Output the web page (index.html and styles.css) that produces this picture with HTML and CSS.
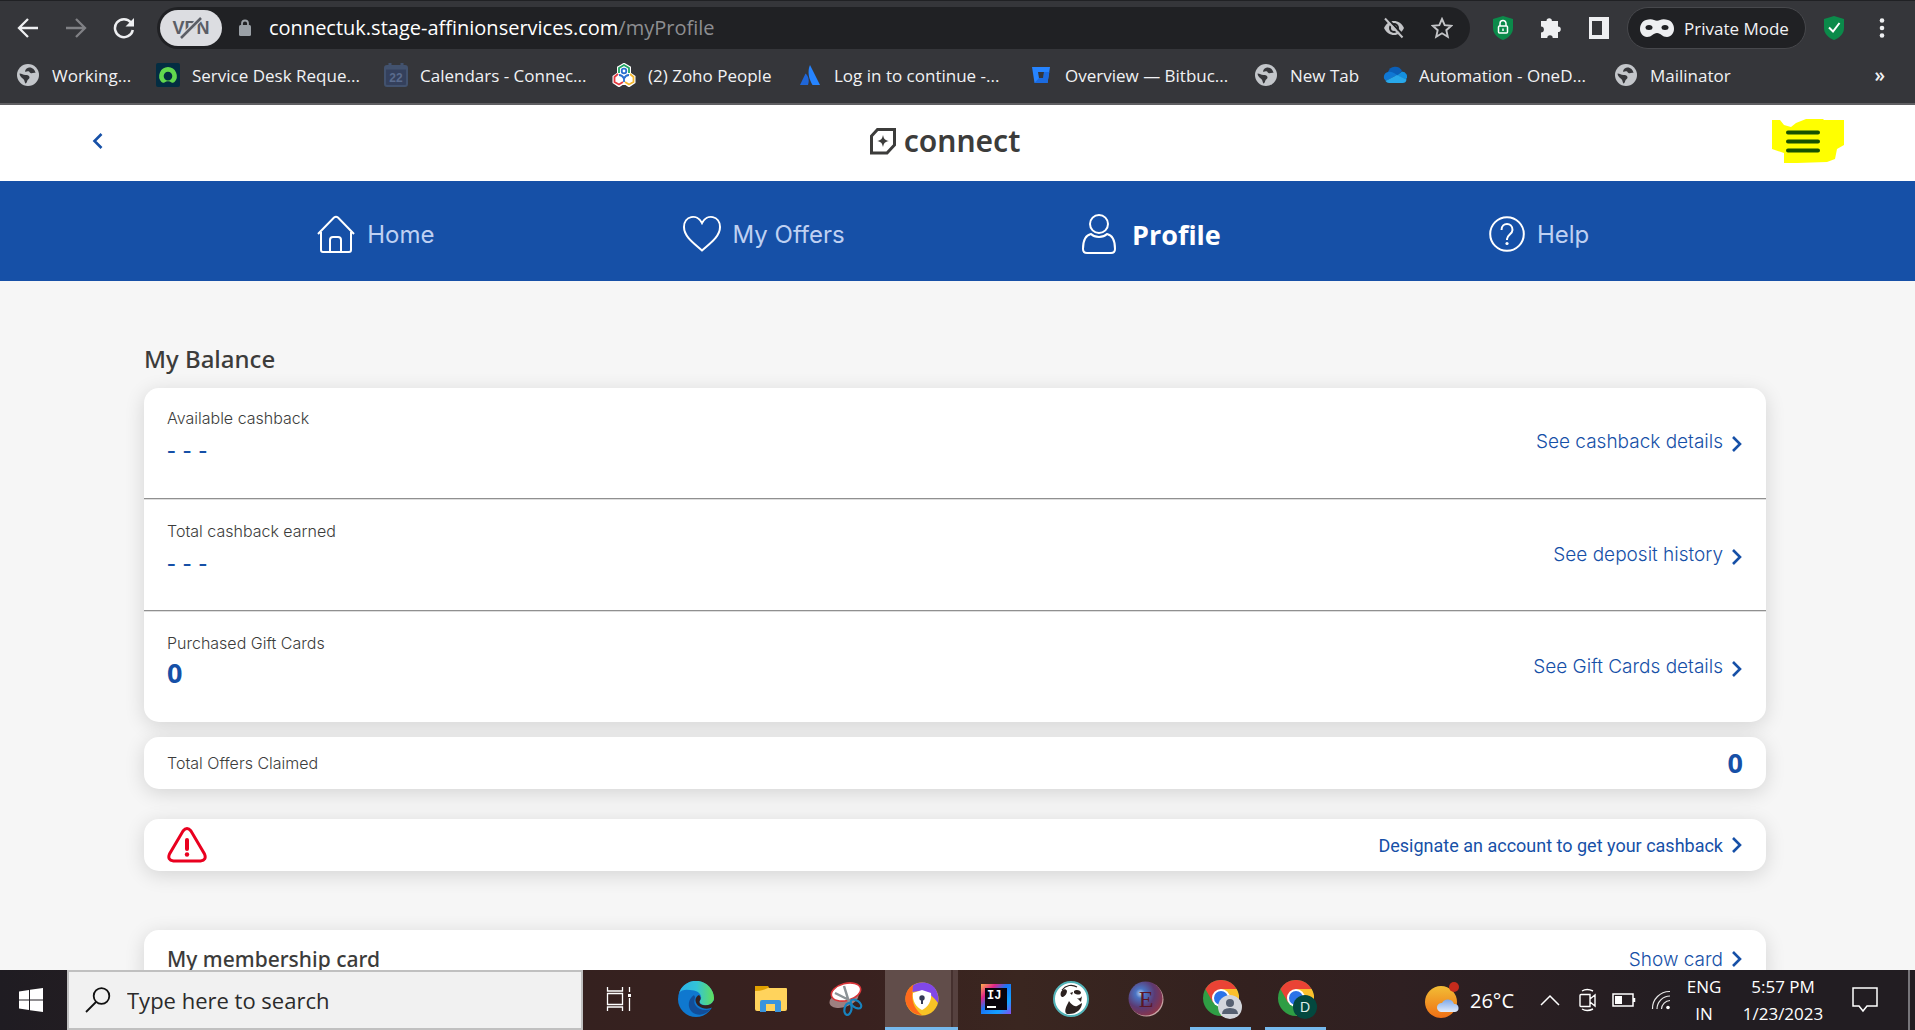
FILE: index.html
```html
<!DOCTYPE html>
<html lang="en">
<head>
<meta charset="utf-8">
<title>Connect - My Profile</title>
<link rel="stylesheet" href="styles.css">
</head>
<body>
<svg width="0" height="0" class="defs" aria-hidden="true">
  <defs>
    <symbol id="globe" viewBox="0 0 24 24"><circle cx="12" cy="12" r="11" fill="#c3c6ca"/><path d="M13 4.500c3-.5 6 2 6.500 5.500-2-.6-3 .6-4.500.3-1.600-.3-1.200-1.800-2.700-2-1.500-.3-2 .8-3.300.2 .3-2 2-3.700 4-4zM3.500 10.500c2.500 0 3.500 1.500 6 1.500 2 0 4 .6 4 2.600 0 1.800-2 1.800-2.400 3.600-.2 1.200-.8 2.200-1.800 2.200-1-2-.6-3.300-2.300-4.700C5.300 14.500 3.700 13 3.500 10.500z" fill="#35363a"/></symbol>
    <symbol id="chevron" viewBox="0 0 12 18"><path d="M2 2l7 7-7 7" fill="none" stroke="#1650a7" stroke-width="2.600"/></symbol>
    <symbol id="chrome" viewBox="0 0 36 36"><circle cx="18" cy="18" r="18" fill="#2f9e44"/><path d="M18 9h15.600A18 18 0 0 1 18 36l8-14z" fill="#fbc02d"/><path d="M2.400 9A18 18 0 0 1 33.600 9H18l-8 13.500z" fill="#ea4335"/><circle cx="18" cy="18" r="9" fill="#fff"/><circle cx="18" cy="18" r="7" fill="#2b73e8"/></symbol>
  </defs>
</svg>

<header class="browser">
  <div class="toolbar">
    <button class="tool tool-nav" aria-label="Back"><svg width="22" height="22" viewBox="0 0 22 22"><path d="M21 11H3M11 2l-9 9 9 9" fill="none" stroke="#eeeff1" stroke-width="2.300"/></svg></button>
    <button class="tool tool-nav" aria-label="Forward"><svg width="22" height="22" viewBox="0 0 22 22"><path d="M1 11h18M11 2l9 9-9 9" fill="none" stroke="#808185" stroke-width="2.300"/></svg></button>
    <button class="tool tool-nav" aria-label="Reload"><svg width="22" height="22" viewBox="0 0 22 22"><path d="M18 5.500A9 9 0 1 0 19.800 13" fill="none" stroke="#eeeff1" stroke-width="2.500"/><path d="M21 1v8.500h-8.500z" fill="#eeeff1"/></svg></button>
    <div class="omnibox">
      <button class="vpn" aria-label="VPN off">VPN<svg class="vpn-slash" width="26" height="24" viewBox="0 0 26 24"><path d="M3 22L22 3" stroke="#dcdde1" stroke-width="5"/><path d="M3 22L23 2" stroke="#5b5e66" stroke-width="2.500"/></svg></button>
      <svg width="14" height="18" viewBox="0 0 14 18"><rect x="1" y="6" width="12" height="11" rx="1.500" fill="#9aa0a6"/><path d="M4 7V4.500a3 3 0 0 1 6 0V7" fill="none" stroke="#9aa0a6" stroke-width="1.800"/></svg>
      <div class="url" role="textbox" contenteditable="true" spellcheck="false" aria-label="Address">connectuk.stage-affinionservices.com<span class="url-path">/myProfile</span></div>
      <button class="tool tool-omni" aria-label="Trackers"><svg width="22" height="22" viewBox="0 0 22 22"><path d="M1 11c2-4.500 6-7 10-7s8 2.500 10 7c-2 4.500-6 7-10 7S3 15.500 1 11z" fill="#c3c4c7"/><circle cx="11" cy="11" r="5" fill="#202124"/><circle cx="11" cy="11" r="3" fill="#c3c4c7"/><path d="M4 1l17 18" stroke="#202124" stroke-width="2"/><path d="M2 1.500l17.500 19" stroke="#c3c4c7" stroke-width="2"/></svg></button>
      <button class="tool tool-omni" aria-label="Bookmark"><svg width="22" height="22" viewBox="0 0 22 22"><path d="M11 2l2.700 6.200 6.600.6-5 4.400 1.500 6.500L11 16.300l-5.800 3.400 1.500-6.500-5-4.400 6.600-.6z" fill="none" stroke="#c3c4c7" stroke-width="1.900"/></svg></button>
    </div>
    <button class="tool tool-ext" aria-label="Site security"><svg width="22" height="24" viewBox="0 0 22 24"><path d="M11 0l10 3v9c0 6-5 10-10 12C6 22 1 18 1 12V3z" fill="#0b8a4a"/><rect x="6.500" y="10" width="9" height="7" rx="1" fill="none" stroke="#fff" stroke-width="1.500"/><path d="M8 10V7.500a3 3 0 0 1 6 0V10M11 12.500v2.500" fill="none" stroke="#fff" stroke-width="1.500"/></svg></button>
    <button class="tool tool-ext" aria-label="Extensions"><svg width="22" height="22" viewBox="0 0 22 22"><path d="M6.500 4a2.700 2.700 0 0 1 5.400 0H18v5.500a2.800 2.800 0 0 1 0 5.600V21h-5.300a2.700 2.700 0 0 0-5.400 0H1v-5.600a2.900 2.900 0 0 0 0-5.800V4z" fill="#eeeff1"/></svg></button>
    <button class="tool tool-ext" aria-label="Side panel"><svg width="22" height="22" viewBox="0 0 22 22"><path d="M1 0h20v22H1zM4 4v14h10V4z" fill="#eeeff1" fill-rule="evenodd"/></svg></button>
    <button class="private"><svg width="34" height="18" viewBox="0 0 34 18"><path d="M6 1C9 0 12 0 14 1c2 1 4 1 6 0 2-1 5-1 8 0 4 1 6 5 6 9s-3 8-7 8c-5 0-6-4-10-4s-5 4-10 4c-4 0-7-4-7-8s2-8 6-9z" fill="#eeeff1"/><ellipse cx="9" cy="8.500" rx="3.500" ry="2.500" fill="#202124"/><ellipse cx="25" cy="8.500" rx="3.500" ry="2.500" fill="#202124"/></svg>Private Mode</button>
    <button class="tool tool-guard" aria-label="Protected"><svg width="22" height="24" viewBox="0 0 22 24"><path d="M11 0l10 3v9c0 6-5 10-10 12C6 22 1 18 1 12V3z" fill="#0b8a4a"/><path d="M6 11.500l4 4 6.500-8.500" fill="none" stroke="#fff" stroke-width="2"/></svg></button>
    <button class="tool tool-menu" aria-label="Menu"><svg width="6" height="20" viewBox="0 0 6 20"><g fill="#eeeff1"><circle cx="3" cy="2.500" r="2.300"/><circle cx="3" cy="10" r="2.300"/><circle cx="3" cy="17.500" r="2.300"/></g></svg></button>
  </div>
  <nav class="bookmarks" aria-label="Bookmarks">
    <a href="#"><svg width="24" height="24"><use href="#globe"/></svg>Working...</a>
    <a href="#"><svg width="24" height="24" viewBox="0 0 24 24"><rect width="24" height="24" rx="2" fill="#032d42"/><path d="M12 4a9 9 0 0 0-6.500 15c1 1 2 1 3 .4 2-1.400 5-1.400 7 0 1 .6 2 .6 3-.4A9 9 0 0 0 12 4zm0 4.800a4.300 4.300 0 1 1 0 8.600 4.300 4.300 0 0 1 0-8.600z" fill="#62d84e"/></svg>Service Desk Reque...</a>
    <a href="#"><svg width="24" height="24" viewBox="0 0 24 24"><rect x="1" y="3" width="22" height="20" rx="2" fill="#34405c" stroke="#42526e" stroke-width="2"/><path d="M1 5h22M6 0v5M18 0v5" stroke="#42526e" stroke-width="3"/><text x="12" y="19" text-anchor="middle" class="cal-text">22</text></svg>Calendars - Connec...</a>
    <a href="#"><svg width="24" height="24" viewBox="0 0 24 24"><g stroke="#fff" stroke-width="4" fill="#fff"><path d="M12 2l5 3v6l-5 3-5-3V5zM7 11l4.500 3v5L7 22l-4.500-3v-5zM17 11l4.500 3v5L17 22l-4.500-3v-5z"/></g><g fill="none" stroke-width="1.800"><path d="M7 10V5l5-3 5 3v5" stroke="#1fa463"/><path d="M6 11l-3.500 3v5L7 21.500l4-2.500" stroke="#e5393f"/><path d="M18 11l3.500 3v5L17 21.500 13 19" stroke="#f5b82e"/><circle cx="12" cy="8" r="2.300" stroke="#2a6fd0"/><path d="M7 12c2 0 4 1.500 5 3.500 1-2 3-3.500 5-3.500M12 15v4" stroke="#2a6fd0"/></g></svg>(2) Zoho People</a>
    <a href="#"><svg width="24" height="24" viewBox="0 0 24 24"><path d="M7.500 10.500c3 2.500 4 7 2.500 11.500H2z" fill="#1f66d8"/><path d="M12 2l10 20h-7.500C11 16 9 9 12 2z" fill="#2684ff"/></svg>Log in to continue -...</a>
    <a href="#"><svg width="24" height="24" viewBox="0 0 24 24"><path d="M3 4h18l-2.500 16h-13z" fill="#2684ff"/><path d="M20.300 9H15l-1 6h-4l-4.500 5h13z" fill="#1b6be0"/><path d="M9 9h6l-1 6h-4z" fill="#35363a"/></svg>Overview — Bitbuc...</a>
    <a href="#"><svg width="24" height="24"><use href="#globe"/></svg>New Tab</a>
    <a href="#"><svg width="24" height="24" viewBox="0 0 24 24"><path d="M5 9a7.500 7.500 0 0 1 14-1l-6 6z" fill="#0a5fb8"/><path d="M5 9c3-.7 5 .3 9 3L3 18a5 5 0 0 1 2-9z" fill="#0f78d4"/><path d="M19 8.500a5 5 0 0 1 4 8l-9-4z" fill="#1490df"/><path d="M2.500 18L14 12l9.500 4.500a4 4 0 0 1-4 3.500H6a5 5 0 0 1-3.500-2z" fill="#28a8ea"/></svg>Automation - OneD...</a>
    <a href="#"><svg width="24" height="24"><use href="#globe"/></svg>Mailinator</a>
    <button class="more" aria-label="More bookmarks">»</button>
  </nav>
</header>

<div class="page">
  <header class="site-header">
    <a class="back" href="#" aria-label="Back"><svg width="12" height="18" viewBox="0 0 12 18"><path d="M9.500 2l-7 7 7 7" fill="none" stroke="#1650a7" stroke-width="2.600"/></svg></a>
    <a class="logo" href="#"><svg width="28" height="28" viewBox="0 0 28 28"><path d="M8.500 2.500h17v15.500l-7.500 8H2.500V9z" fill="none" stroke="#3c3c3b" stroke-width="3"/><path d="M14 8c.8 4 2 5.200 6 6-4 .8-5.200 2-6 6-.8-4-2-5.200-6-6 4-.8 5.200-2 6-6z" fill="#3c3c3b"/></svg>connect</a>
    <button class="menu" aria-label="Menu"><svg width="72" height="44" viewBox="0 0 72 44"><path d="M0 1h8l4 5 7 2 5-4 10-4h17l1 1h20v25l-7 4-2 10-8 3-30 1H12V34l-12-4z" fill="#ffff00"/><path d="M16 13.500h30M16 22.500h30M16 31.500h30" stroke="#175200" stroke-width="4" stroke-linecap="round"/></svg></button>
  </header>
  <nav class="site-nav" aria-label="Main">
    <a href="#"><svg width="38" height="38" viewBox="0 0 38 38"><path d="M1 19L17 2.500q2-1.500 4 0L37 19M4 17v18q0 2 2 2h26q2 0 2-2V17M13 37V25q0-3 3-3h5q3 0 3 3v12" fill="none" stroke="#fff" stroke-width="2"/></svg>Home</a>
    <a href="#"><svg width="38" height="38" viewBox="0 0 38 38"><path d="M19 35.500C12 29 1 22 1 12 1 1 14-2 19 8c5-10 18-7 18 4 0 10-11 17-18 23.500z" fill="none" stroke="#fff" stroke-width="2"/></svg>My Offers</a>
    <a class="active" href="#" aria-current="page"><svg width="34" height="40" viewBox="0 0 34 40"><ellipse cx="17" cy="10" rx="9" ry="9" fill="none" stroke="#fff" stroke-width="2"/><path d="M9 20c-5 1-8 5-8 15 0 3 2 4 4 4h24c2 0 4-1 4-4 0-10-3-14-8-15-4 4-12 4-16 0z" fill="none" stroke="#fff" stroke-width="2"/></svg>Profile</a>
    <a href="#"><svg width="36" height="38" viewBox="0 0 36 38"><circle cx="18" cy="19" r="16.800" fill="none" stroke="#fff" stroke-width="2"/><path d="M12.500 15c0-8 11-8 11 0 0 4-5.500 5-5.500 9v1" fill="none" stroke="#fff" stroke-width="2"/><circle cx="18" cy="28.500" r="1.600" fill="#fff"/></svg>Help</a>
  </nav>
  <main class="content">
    <h1>My Balance</h1>
    <section class="card balance">
      <div class="row">
        <div><div class="label">Available cashback</div><div class="dashes">- - -</div></div>
        <a class="link" href="#">See cashback details<svg width="12" height="18"><use href="#chevron"/></svg></a>
      </div>
      <div class="row">
        <div><div class="label">Total cashback earned</div><div class="dashes">- - -</div></div>
        <a class="link" href="#">See deposit history<svg width="12" height="18"><use href="#chevron"/></svg></a>
      </div>
      <div class="row">
        <div><div class="label">Purchased Gift Cards</div><div class="number">0</div></div>
        <a class="link" href="#">See Gift Cards details<svg width="12" height="18"><use href="#chevron"/></svg></a>
      </div>
    </section>
    <section class="card strip claimed"><div class="label">Total Offers Claimed</div><div class="number">0</div></section>
    <section class="card strip designate">
      <svg width="40" height="36" viewBox="0 0 40 36"><path d="M16 4q4-5 8 0l13.500 23q2.500 6-4 7H6.500q-6.500-1-4-7z" fill="none" stroke="#e9001f" stroke-width="3"/><path d="M20 13v9" stroke="#e9001f" stroke-width="4" stroke-linecap="round"/><circle cx="20" cy="27.500" r="2.200" fill="#e9001f"/></svg>
      <a class="link narrow" href="#">Designate an account to get your cashback<svg width="12" height="18"><use href="#chevron"/></svg></a>
    </section>
    <section class="card membership"><h2>My membership card</h2><a class="link" href="#">Show card<svg width="12" height="18"><use href="#chevron"/></svg></a></section>
  </main>
</div>

<footer class="taskbar">
  <button class="start" aria-label="Start"><svg width="24" height="24" viewBox="0 0 24 24"><path d="M0 3.400l10-1.500V11.500H0zM11 1.700L24 0v11.500H11zM0 12.500h10v9.600L0 20.600zM11 12.500h13V24l-13-1.700z" fill="#fff"/></svg></button>
  <label class="search"><svg width="26" height="26" viewBox="0 0 26 26"><circle cx="16.500" cy="9" r="7.800" fill="none" stroke="#111" stroke-width="1.800"/><path d="M11 15L1 25" stroke="#111" stroke-width="1.800"/></svg><input type="text" placeholder="Type here to search" aria-label="Search"></label>
  <div class="apps">
    <button aria-label="Task View"><svg width="26" height="26" viewBox="0 0 26 26"><path d="M1.500 1v4h15V1M1.500 7.500h15v11h-15zM1.500 25v-4h15v4M23.500 1v5M23.500 12v13" fill="none" stroke="#fff" stroke-width="1.300"/><path d="M22 8h3v3h-3z" fill="#fff"/></svg></button>
    <button aria-label="Edge"><svg width="36" height="36" viewBox="0 0 36 36"><defs><linearGradient id="edge-a" x1="0" x2="1"><stop offset="0" stop-color="#2bb2e8"/><stop offset=".5" stop-color="#33c3d8"/><stop offset="1" stop-color="#62e05b"/></linearGradient></defs><circle cx="18" cy="18" r="18" fill="#0f78cf"/><path d="M1 12A18 18 0 0 1 36 17c0 5-5 8-10 7-4-.6-5-3-4-4.500 3-3 0-9-6-10C9 8.500 4 8 1 12z" fill="url(#edge-a)"/><path d="M16 14c-6 4-7 12-2 17 5 4 13 4 19-3-5 2-12 1-15-3-3-4-1-7-1-9z" fill="#124d98"/><path d="M21 14c2 2 2 4 .8 5.700-1.300 2 .7 4.300 5.200 4.600 4 .2 7-1.300 8.500-4.500l1.500 0-2 6.500c-8 3.500-17-.3-17.500-6.800-.2-2.500 1.500-4.500 3.500-5.500z" fill="#34201f"/></svg></button>
    <button aria-label="File Explorer"><svg width="32" height="28" viewBox="0 0 32 28"><path d="M0 1h13l2 3v4H0z" fill="#e0a000"/><path d="M0 6q7 0 13-3h18q1 0 1 1v20q0 2-2 2H2q-2 0-2-2z" fill="#ffd35c"/><path d="M5 27V17q0-2 2-2h17q2 0 2 2v10h-6v-8h-9v8z" fill="#3a94dd"/></svg></button>
    <button aria-label="Snipping Tool"><svg width="36" height="36" viewBox="0 0 36 36"><ellipse cx="16" cy="18" rx="15" ry="8" fill="#9d8080" transform="rotate(-18 16 18)"/><ellipse cx="18" cy="11" rx="15" ry="8.500" fill="#fff" stroke="#d9363a" stroke-width="1.600" transform="rotate(-15 18 11)"/><path d="M7 12l16 8M16 5l5 16" stroke="#8b9296" stroke-width="2.500"/><ellipse cx="20" cy="28" rx="3.500" ry="6" fill="none" stroke="#1783be" stroke-width="2.200" transform="rotate(12 20 28)"/><ellipse cx="28" cy="23" rx="3.500" ry="6" fill="none" stroke="#1783be" stroke-width="2.200" transform="rotate(-55 28 23)"/></svg></button>
    <button class="active running" aria-label="Secure Browser"><svg width="34" height="34" viewBox="0 0 34 34"><circle cx="17" cy="17" r="16.500" fill="#f7c325"/><path d="M9 2.500C0 7-3 20 5 28c4 4 8 5 12 5C8 26 5 16 9 2.500z" fill="#ff6a1c"/><path d="M8 3.500C14-1 26-1 31 8c2 4 3 8 2 13C27 12 19 7 7.500 10z" fill="#8148e8"/><path d="M17 8l9 3c1 8-3 14-9 17-6-3-10-9-9-17z" fill="#fff"/><circle cx="17" cy="16" r="2.700" fill="#343a55"/><path d="M16 17h2v5h-2z" fill="#343a55"/></svg></button>
    <button aria-label="IntelliJ IDEA"><svg width="30" height="30" viewBox="0 0 30 30"><defs><linearGradient id="ij" x1="0" y1="0" x2="1" y2="1"><stop offset="0" stop-color="#ffb04a"/><stop offset=".25" stop-color="#e0258a"/><stop offset=".45" stop-color="#1a75f5"/><stop offset=".75" stop-color="#12a0ff"/><stop offset="1" stop-color="#8a4cf0"/></linearGradient></defs><path d="M0 0h30v30H0z" fill="url(#ij)"/><path d="M4 4h22v22H4z" fill="#08030c"/><text x="6" y="15" class="ij-text">IJ</text><path d="M6 22h9v2H6z" fill="#fff"/></svg></button>
    <button aria-label="DBeaver"><svg width="36" height="36" viewBox="0 0 36 36"><circle cx="18" cy="18" r="17" fill="#fff" stroke="#53b3b8" stroke-width="2"/><path d="M14 33c-4-2 0-9 2-13 2 3 5 6 8 5l5-3c0 6-6 12-15 11zM21 10c2-2 7-1 7 2-1 2-4 2-7 0zM8 11c1-3 5-4 6-1 0 3-2 5-4 6-2 0-3-2-2-5zM17 12l3-1-1 3zM24 17c2 1 4 0 5-2l-1 6z" fill="#2b211f"/><path d="M9 9C13 4 19 3 24 6" fill="none" stroke="#2b211f" stroke-width="1.200"/></svg></button>
    <button aria-label="Eclipse"><svg width="36" height="36" viewBox="0 0 36 36"><defs><radialGradient id="ecl" cx=".35" cy=".35" r=".7"><stop offset="0" stop-color="#b8cff0"/><stop offset=".2" stop-color="#4a74c4"/><stop offset=".6" stop-color="#5c3a72"/><stop offset="1" stop-color="#8a3448"/></radialGradient></defs><circle cx="18.500" cy="18.500" r="17" fill="#c7a6a6"/><circle cx="17.500" cy="17.500" r="17" fill="url(#ecl)"/><text x="18" y="26" text-anchor="middle" class="ecl-text">E</text></svg></button>
    <button class="running" aria-label="Chrome, guest"><svg width="42" height="42" viewBox="0 0 42 42"><svg width="36" height="36" x="3" y="2"><use href="#chrome"/></svg><circle cx="30" cy="29" r="12" fill="#d3d6dc"/><circle cx="30" cy="25" r="4" fill="#566071"/><path d="M22 36q0-6 8-6t8 6z" fill="#566071"/></svg></button>
    <button class="running" aria-label="Chrome, profile D"><svg width="42" height="42" viewBox="0 0 42 42"><svg width="36" height="36" x="3" y="2"><use href="#chrome"/></svg><circle cx="30" cy="29" r="12" fill="#03483f"/><text x="30" y="34" text-anchor="middle" class="badge-text">D</text></svg></button>
  </div>
  <div class="tray">
    <button class="weather"><svg width="34" height="36" viewBox="0 0 34 36"><defs><linearGradient id="sun" x2="0" y2="1"><stop offset="0" stop-color="#f2bd35"/><stop offset="1" stop-color="#ef6f15"/></linearGradient><linearGradient id="cloud" x2="0" y2="1"><stop offset="0" stop-color="#7ea9ea"/><stop offset="1" stop-color="#e2ecfb"/></linearGradient></defs><circle cx="16" cy="20" r="16" fill="url(#sun)"/><circle cx="29" cy="5" r="5" fill="#c42b1c"/><path d="M16 30a4.500 4.500 0 0 1 1-9 6.500 6.500 0 0 1 12 1 4 4 0 0 1 1 8z" fill="url(#cloud)"/></svg>26°C</button>
    <button class="t-caret" aria-label="Hidden icons"><svg width="20" height="12" viewBox="0 0 20 12"><path d="M1 11l9-9 9 9" fill="none" stroke="#fff" stroke-width="1.500"/></svg></button>
    <button class="t-cam" aria-label="Meet Now"><svg width="18" height="24" viewBox="0 0 18 24"><path d="M2 6.500h9v12H2q-1 0-1-1v-10q0-1 1-1zM11 11l5-4v11l-5-4M3 3q5-3 11 0M3 21q5 3 11 0" fill="none" stroke="#fff" stroke-width="1.400"/></svg></button>
    <button class="t-bat" aria-label="Battery"><svg width="24" height="14" viewBox="0 0 24 14"><path d="M1 1h20v12H1zM22.500 5v4" fill="none" stroke="#fff" stroke-width="1.500"/><path d="M3 3h7v8H3z" fill="#fff"/></svg></button>
    <button class="t-wifi" aria-label="Network"><svg width="20" height="20" viewBox="0 0 20 20"><path d="M1.500 19A17 17 0 0 1 19 1.500M6 19A13 13 0 0 1 19 6M10.500 19A9 9 0 0 1 19 10.500" fill="none" stroke="#e8e8e8" stroke-width="1.200"/><circle cx="17" cy="17.500" r="1.800" fill="#fff"/></svg></button>
    <button class="two-line lang">ENG<br>IN</button>
    <button class="two-line clock">5:57 PM<br>1/23/2023</button>
    <button class="notify" aria-label="Notifications"><svg width="26" height="26" viewBox="0 0 26 26"><path d="M1 1h24v18H15l-4 5-4-5H1z" fill="none" stroke="#fff" stroke-width="1.500"/></svg></button>
  </div>
</footer>
</body>
</html>
```
FILE: styles.css
```css
* { box-sizing: border-box; }
body {
  margin: 0;
  height: 100vh;
  display: flex;
  flex-direction: column;
  overflow: hidden;
  font-family: "Open Sans", sans-serif;
  background: #f6f6f6;
}
button { padding: 0; border: 0; background: none; color: inherit; font: inherit; }
a { color: inherit; text-decoration: none; }
svg { flex: none; display: block; }
.defs { position: absolute; }

/* Browser chrome */
.browser {
  flex: none;
  background: #35363a;
  color: #f1f2f4;
  border-top: 1px solid #202124;
  border-bottom: 2px solid #5f5f62;
}
.toolbar { display: flex; align-items: center; height: 54px; padding: 0 13px 0 4px; }
.tool { display: flex; align-items: center; justify-content: center; }
.tool-nav { width: 48px; }
.tool-omni { width: 48px; }
.tool-ext { width: 48px; }
.omnibox {
  flex: 1;
  display: flex;
  align-items: center;
  height: 42px;
  margin: 0 9px;
  padding: 0 4px 0 3px;
  border-radius: 21px;
  background: #202124;
}
.vpn {
  position: relative;
  width: 62px;
  height: 36px;
  margin-right: 16px;
  border-radius: 18px;
  background: #dcdde1;
  color: #5b5e66;
  font: 700 18px/36px "Liberation Sans", sans-serif;
}
.vpn-slash { position: absolute; left: 18px; top: 6px; }
.url { flex: 1; margin-left: 17px; font-size: 20px; line-height: 28px; color: #fff; outline: 0; white-space: nowrap; }
.url-path { color: #8d8e91; }
.private {
  display: flex;
  align-items: center;
  gap: 10px;
  width: 179px;
  height: 42px;
  margin-left: 4px;
  padding-left: 12px;
  border: 1px solid #47484c;
  border-radius: 21px;
  background: #202124;
  font-size: 17px;
}
.tool-guard { width: 56px; }
.tool-menu { width: 40px; }
.bookmarks {
  display: grid;
  grid-template-columns: 140px 228px 228px 186px 231px 225px 129px 231px 1fr auto;
  align-items: center;
  height: 48px;
  padding: 0 30px 8px 16px;
  font-size: 17px;
  white-space: nowrap;
}
.bookmarks a { display: flex; align-items: center; gap: 12px; }
.more { font-weight: 600; font-size: 19px; }
.cal-text { font: 700 12px "Liberation Sans", sans-serif; fill: #5a6b8c; }

/* Site */
.page { flex: 1; min-height: 0; overflow: hidden; font-family: Inter, sans-serif; }
.site-header {
  display: grid;
  grid-template-columns: 1fr auto 1fr;
  align-items: center;
  height: 76px;
  padding: 0 71px 4px 45px;
  background: #fff;
}
.back { justify-self: start; margin-left: 47px; }
.logo { display: flex; align-items: center; gap: 7px; color: #3c3c3b; font: 600 30px/36px "Noto Sans", sans-serif; }
.menu { justify-self: end; }
.site-nav {
  display: grid;
  grid-template-columns: repeat(4, 1fr);
  height: 100px;
  padding: 6px 182px 0;
  background: #1650a7;
  color: #bfd0f2;
  font-size: 24px;
}
.site-nav a { display: flex; align-items: center; justify-content: center; gap: 12px; }
.site-nav .active { gap: 16px; color: #fff; font-family: "Open Sans", sans-serif; font-size: 27px; font-weight: 700; }
.content { padding: 60px 149px 0 144px; color: #3c3c3b; }
h1, h2 { margin: 0; font: 500 24px/36px "Noto Sans", sans-serif; }
h1 { margin-bottom: 11px; }
h2 { font-size: 21px; }
.card { background: #fff; border-radius: 15px; box-shadow: 0 4px 20px rgba(0, 0, 0, 0.14); }
.row { display: flex; justify-content: space-between; height: 110px; padding: 18px 23px 0; }
.row + .row { height: 112px; padding-top: 20px; border-top: 1px solid #909090; box-shadow: inset 0 1px #dedede; }
.label { font-size: 16px; font-weight: 300; line-height: 24px; }
.dashes { color: #1650a7; font: 500 27px/38px "Open Sans", sans-serif; }
.number { color: #1650a7; font: 700 27px/36px "Open Sans", sans-serif; }
.link { display: flex; align-items: center; gap: 8px; color: #1650a7; font-size: 19px; font-weight: 300; }
.link.narrow { font-family: Roboto, sans-serif; font-size: 18px; font-weight: 400; }
.row .link { height: 70px; }
.row .link svg { margin-top: 6px; }
.strip { display: flex; align-items: center; justify-content: space-between; height: 52px; padding: 0 23px; }
.claimed { margin-top: 15px; }
.designate { margin-top: 30px; }
.membership { display: flex; align-items: center; justify-content: space-between; margin-top: 59px; padding: 11px 23px 40px; }

/* Taskbar */
.taskbar {
  flex: none;
  display: flex;
  height: 60px;
  background: linear-gradient(90deg, #1f1c22 0, #35211f 583px, #39211f 860px, #3a2620 1020px, #33211f 1250px, #2f2022 1400px, #221d22 1700px, #221d22 100%);
  color: #fff;
}
.start { width: 67px; display: flex; align-items: center; justify-content: center; padding-right: 5px; }
.search {
  width: 516px;
  display: flex;
  align-items: center;
  gap: 16px;
  padding-left: 16px;
  border: 2px solid #c0c0c0;
  background: #f1f1f1;
}
.search input { flex: 1; padding: 0; border: 0; background: none; outline: 0; font: 22px/30px "Open Sans", sans-serif; color: #2b2b2b; }
.search input::placeholder { color: #2b2b2b; opacity: 1; }
.apps { display: flex; padding: 0 0 0 1px; gap: 14px; }
.apps button { width: 61px; display: flex; align-items: center; justify-content: center; border-bottom: 3px solid transparent; }
.apps button:first-child { margin: 0 2px 0 4px; }
.apps .running { border-bottom-color: #76b9ed; }
.apps .active { width: 73px; margin: 0 -7px 0 -5px; background: linear-gradient(90deg, #614d4a 66px, #45302e 66px, #45302e 68px, #56413f 68px); }
.ij-text { font: 700 12px "Liberation Mono", monospace; fill: #fff; }
.ecl-text { font: 24px "Liberation Serif", serif; fill: #5b1626; }
.badge-text { font: 14px "Liberation Sans", sans-serif; fill: #dfeee9; }
.tray { flex: 1; display: flex; justify-content: flex-end; align-items: center; border-right: 2px solid #77757a; margin-right: 5px; }
.weather { display: flex; align-items: center; gap: 11px; margin-right: 26px; font-size: 20px; }
.t-caret { margin-right: 19px; }
.t-cam { margin-right: 15px; }
.t-bat { margin-right: 15px; }
.t-wifi { margin-right: 13px; }
.two-line { font-size: 17px; line-height: 27px; text-align: center; white-space: nowrap; }
.lang { width: 40px; margin-right: 16px; }
.clock { width: 86px; margin-right: 26px; }
.notify { margin-right: 30px; }
```
